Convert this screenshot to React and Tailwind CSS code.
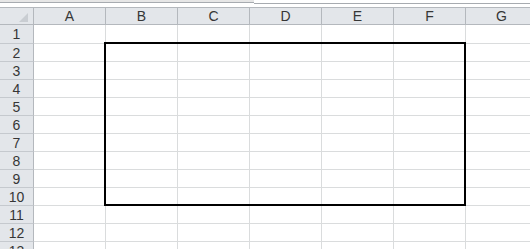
import React from "react";

const cols = ["A", "B", "C", "D", "E", "F", "G"];
const rows = Array.from({ length: 13 }, (_, i) => i + 1);

export default function App() {
  return (
    <div
      className="w-[530px] h-[249px] overflow-hidden bg-white relative text-[#363636]"
      style={{ fontFamily: '"Liberation Sans", "DejaVu Sans", sans-serif' }}
    >
      {/* top strip */}
      <div className="h-[7px] flex">
        <div className="w-[254px] h-[3px] bg-[#e6e6e6] border-b border-[#a7abb0]" />
        <div className="flex-1 h-[4px] border-b border-[#a7abb0] bg-white" />
      </div>
      <div className="relative">
        {/* header row */}
        <div className="flex h-[18px] border-y border-[#b4b8bd] bg-[#e3e6ea]">
          <div className="w-[34px] shrink-0 border-r border-[#b4b8bd] relative">
            <div className="absolute right-[5px] bottom-[2px] w-0 h-0 border-l-[9px] border-l-transparent border-b-[9px] border-b-[#c9cdd2]" />
          </div>
          {cols.map((c) => (
            <div
              key={c}
              className="w-[72px] shrink-0 border-r border-[#b4b8bd] flex items-center justify-center text-[14px] leading-none"
            >
              {c}
            </div>
          ))}
        </div>
        {/* body rows */}
        {rows.map((r) => (
          <div key={r} className={`flex ${r === 1 ? "h-[19px]" : "h-[18px]"}`}>
            <div className="w-[34px] shrink-0 bg-[#e3e6ea] border-r border-r-[#b4b8bd] border-b border-b-[#c5c9ce] flex items-center justify-center text-[14px] leading-none">
              {r}
            </div>
            {cols.map((c) => (
              <div
                key={c}
                className="w-[72px] shrink-0 border-r border-b border-[#dadcdd]"
              />
            ))}
          </div>
        ))}
      </div>
      {/* thick selection box */}
      <div className="absolute left-[104px] top-[42px] w-[362px] h-[164px] border-2 border-black" />
    </div>
  );
}
